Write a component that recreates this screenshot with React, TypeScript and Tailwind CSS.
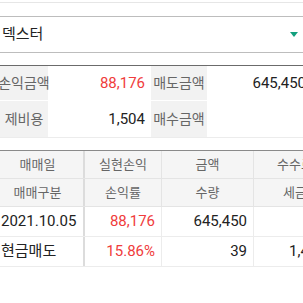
import React from 'react';

const font = { fontFamily: 'Roboto, "Noto Sans CJK KR", sans-serif' };

const summary = [
  [
    { label: '손익금액', value: '88,176', red: true },
    { label: '매도금액', value: '645,450', red: false },
  ],
  [
    { label: '제비용', value: '1,504', red: false },
    { label: '매수금액', value: '', red: false },
  ],
];

const headerRows = [
  ['매매일', '실현손익', '금액', '수수료'],
  ['매매구분', '손익률', '수량', '세금'],
];

const dataRows = [
  ['2021.10.05', '88,176', '645,450', ''],
  ['현금매도', '15.86%', '39', '1,4'],
];

export default function App() {
  return (
    <div className="w-[303px] h-[303px] overflow-hidden bg-white text-[#222]" style={font}>
      {/* top bar edge */}
      <div className="h-[2px]" />
      <div className="h-[14px] border-t border-[#e6e6e6]" />

      {/* account dropdown */}
      <div className="h-[37px] border-y border-[#bdbdbd] flex items-center justify-between pl-[2px] pr-[5px]">
        <span className="text-[15px]">덱스터</span>
        <span className="w-0 h-0 border-l-[4px] border-r-[4px] border-t-[5px] border-l-transparent border-r-transparent border-t-[#13a07e]" />
      </div>

      {/* summary */}
      <div className="mt-[12px] border-t border-[#6b6b6b] w-[340px]">
        {summary.map((row, i) => (
          <div key={i} className={`flex border-b ${i === 0 ? 'h-[35px] border-white' : 'h-[37px] border-[#ececec]'}`}>
            {row.map((c, j) => (
              <React.Fragment key={j}>
                <div className={`bg-[#f2f2f2] flex items-center justify-center shrink-0 text-[14px] text-[#666] whitespace-nowrap ${j === 0 ? 'w-[48px]' : 'w-[56px]'}`}>
                  {c.label}
                </div>
                <div className={`flex items-center justify-end shrink-0 text-[15px] ${j === 0 ? 'w-[103px] pr-[6px]' : 'w-[99px] pr-0'} ${c.red ? 'text-[#f03c3c]' : ''}`}>
                  {c.value}
                </div>
              </React.Fragment>
            ))}
          </div>
        ))}
      </div>

      {/* detail table */}
      <div className="mt-[12px] border-t border-[#8a8a8a] w-[360px]">
        {headerRows.map((row, i) => (
          <div key={i} className="flex h-[28px] bg-[#f5f5f5] border-b border-[#e4e4e4] text-[13px] text-[#666]">
            <div className="w-[85px] flex items-center justify-center pr-[8px] border-r-[2px] border-[#dcdcdc] shrink-0">{row[0]}</div>
            <div className="w-[77px] flex items-center justify-center border-r border-[#e4e4e4] shrink-0">{row[1]}</div>
            <div className="w-[92px] flex items-center justify-center border-r border-[#e4e4e4] shrink-0">{row[2]}</div>
            <div className="w-[82px] flex items-center justify-center shrink-0">{row[3]}</div>
          </div>
        ))}
        {dataRows.map((row, i) => (
          <div key={i} className="flex h-[30px] border-b border-[#ececec] text-[15px]">
            <div className="w-[85px] flex items-center pl-[1px] border-r-[2px] border-[#dcdcdc] shrink-0 whitespace-nowrap">{row[0]}</div>
            <div className="w-[77px] flex items-center justify-end pr-[6px] border-r border-[#ececec] text-[#f03c3c] shrink-0">{row[1]}</div>
            <div className="w-[92px] flex items-center justify-end pr-[6px] border-r border-[#ececec] shrink-0">{row[2]}</div>
            <div className="w-[82px] flex items-center pl-[35px] shrink-0">{row[3]}</div>
          </div>
        ))}
      </div>
    </div>
  );
}
